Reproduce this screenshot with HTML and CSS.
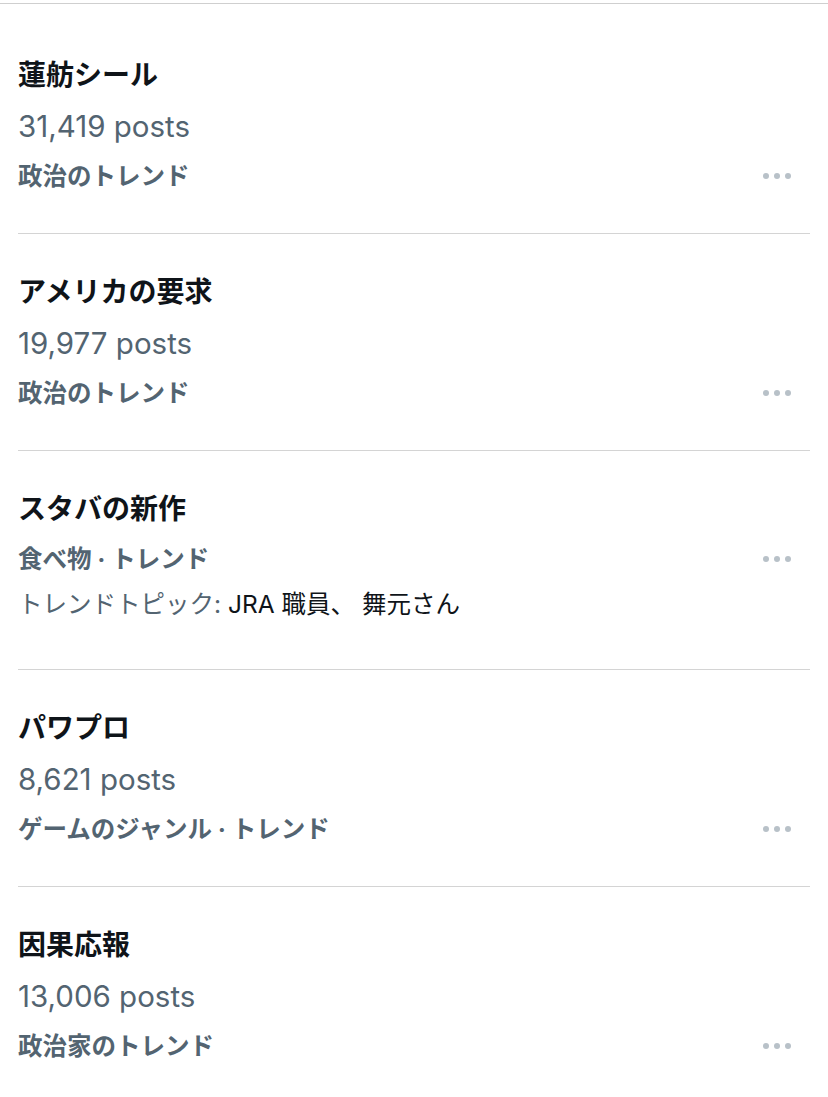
FILE: index.html
```html
<!DOCTYPE html>
<html lang="ja">
<head>
  <meta charset="UTF-8">
  <meta name="viewport" content="width=device-width, initial-scale=1.0">
  <title>トレンド</title>
  <link rel="stylesheet" href="styles.css">
</head>
<body>
<div class="top-rule"></div>

<ul class="trends">
  <li class="trend first">
    <div class="trend-title">蓮舫シール</div>
    <div class="trend-count">31,419 posts</div>
    <div class="trend-meta">
      <span>政治のトレンド</span>
      <span class="more"><i></i><i></i><i></i></span>
    </div>
  </li>

  <li class="trend">
    <div class="trend-title">アメリカの要求</div>
    <div class="trend-count">19,977 posts</div>
    <div class="trend-meta">
      <span>政治のトレンド</span>
      <span class="more"><i></i><i></i><i></i></span>
    </div>
  </li>

  <li class="trend with-topic">
    <div class="trend-title">スタバの新作</div>
    <div class="trend-meta">
      <span>食べ物 · トレンド</span>
      <span class="more"><i></i><i></i><i></i></span>
    </div>
    <div class="trend-topic">トレンドトピック: <span class="topic-names">JRA 職員、 舞元さん</span></div>
  </li>

  <li class="trend">
    <div class="trend-title">パワプロ</div>
    <div class="trend-count">8,621 posts</div>
    <div class="trend-meta">
      <span>ゲームのジャンル · トレンド</span>
      <span class="more"><i></i><i></i><i></i></span>
    </div>
  </li>

  <li class="trend">
    <div class="trend-title">因果応報</div>
    <div class="trend-count">13,006 posts</div>
    <div class="trend-meta">
      <span>政治家のトレンド</span>
      <span class="more"><i></i><i></i><i></i></span>
    </div>
  </li>
</ul>
</body>
</html>
```

FILE: styles.css
```css
body {
  margin: 0;
  background-color: #fff;
  font-family: Inter, "Noto Sans CJK JP", sans-serif;
  color: #0f1419;
}
.top-rule {
  margin-top: 3px;
  height: 1px;
  background-color: #cfcfcf;
}
.trends {
  list-style: none;
  margin: 0;
  padding: 0 18px;
}
.trend {
  padding: 41px 0 40px;
  border-bottom: 1px solid #d4d4d4;
}
.trend.first {
  padding-top: 54px;
}
.trend-title {
  font-size: 28px;
  font-weight: 700;
  line-height: 34px;
}
.trend-count {
  margin-top: 16px;
  font-size: 29.5px;
  line-height: 36px;
  color: #536471;
}
.trend-meta {
  display: flex;
  align-items: center;
  justify-content: space-between;
  margin-top: 15px;
  font-size: 24.5px;
  font-weight: 700;
  line-height: 34px;
  color: #536471;
}
.with-topic .trend-meta {
  margin-top: 16px;
}
.trend-topic {
  margin-top: 11px;
  margin-bottom: 8px;
  font-size: 24.5px;
  line-height: 34px;
  color: #536471;
}
.topic-names {
  color: #0f1419;
}
.more {
  display: flex;
  gap: 5px;
  margin-right: 19px;
}
.more i {
  width: 6px;
  height: 6px;
  border-radius: 50%;
  background-color: #b8c1c8;
}
```
